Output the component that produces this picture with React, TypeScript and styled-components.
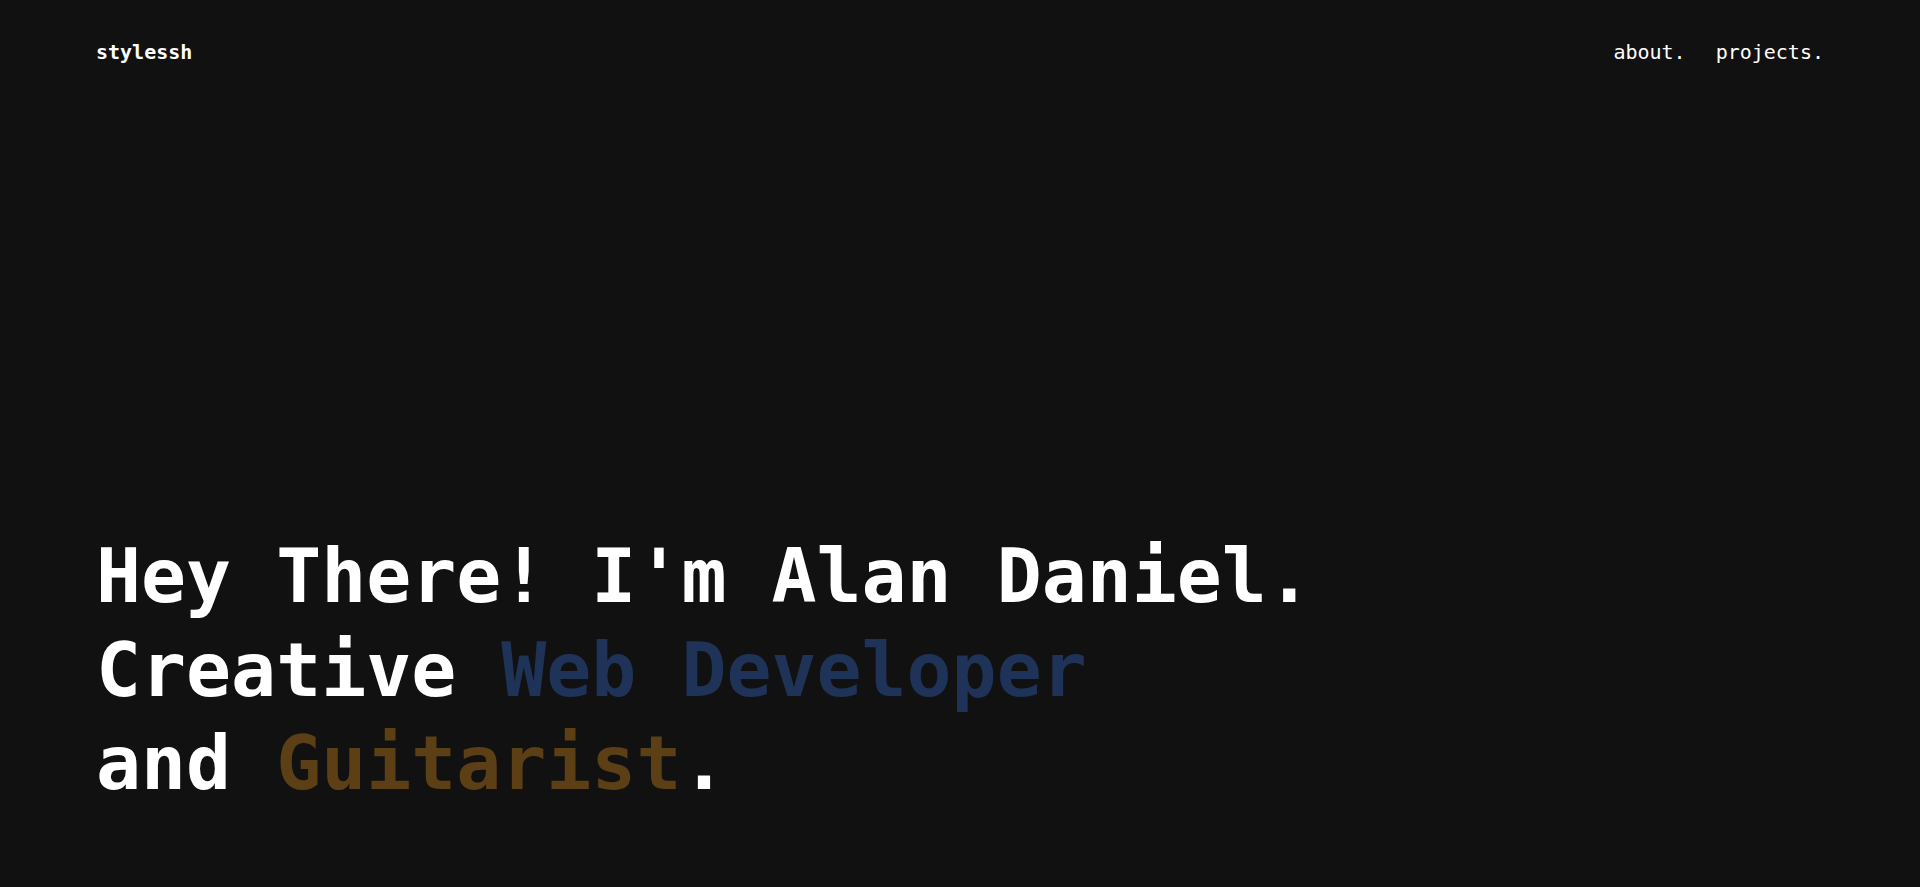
import React from "react";
import styled, { createGlobalStyle } from "styled-components";

const GlobalStyle = createGlobalStyle`
  html, body {
    margin: 0;
    padding: 0;
    background: #111111;
  }
  body {
    font-family: "DejaVu Sans Mono", "Liberation Mono", monospace;
    color: #ffffff;
  }
  * { box-sizing: border-box; }
`;

const Page = styled.div`
  min-height: 100vh;
  display: flex;
  flex-direction: column;
  background: #111111;
  padding: 0 96px;
`;

const Header = styled.header`
  display: flex;
  justify-content: space-between;
  align-items: center;
  padding-top: 40px;
  height: 64px;
`;

const Logo = styled.a`
  font-size: 20px;
  line-height: 24px;
  font-weight: 700;
  color: #ffffff;
  text-decoration: none;
`;

const Nav = styled.nav`
  display: flex;
  gap: 30px;
`;

const NavLink = styled.a`
  font-size: 20px;
  line-height: 24px;
  font-weight: 400;
  color: #ffffff;
  text-decoration: none;
`;

const Hero = styled.main`
  flex: 1;
  display: flex;
  align-items: flex-end;
  padding-bottom: 76px;
`;

const Title = styled.h1`
  margin: 0;
  font-size: 74.8px;
  line-height: 93.75px;
  font-weight: 700;
  color: #ffffff;
  white-space: pre;
`;

const Accent = styled.span<{ $tone: string }>`
  color: ${(p) => p.$tone};
`;

export default function App() {
  return (
    <>
      <GlobalStyle />
      <Page>
        <Header>
          <Logo href="#">stylessh</Logo>
          <Nav>
            <NavLink href="#">about.</NavLink>
            <NavLink href="#">projects.</NavLink>
          </Nav>
        </Header>
        <Hero>
          <Title>
            Hey There! I'm Alan Daniel.
            <br />
            Creative <Accent $tone="#1f3358">Web Developer</Accent>
            <br />
            and <Accent $tone="#5c3f15">Guitarist</Accent>.
          </Title>
        </Hero>
      </Page>
    </>
  );
}
